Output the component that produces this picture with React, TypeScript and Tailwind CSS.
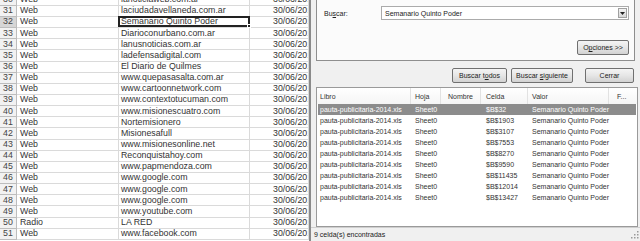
import React from "react";

const sheetRows: [number, string, string][] = [
  [30, "Web", "lanoticiaweb.com.ar"],
  [31, "Web", "laciudadavellaneda.com.ar"],
  [32, "Web", "Semanario Quinto Poder"],
  [33, "Web", "Diarioconurbano.com.ar"],
  [34, "Web", "lanusnoticias.com.ar"],
  [35, "Web", "ladefensadigital.com"],
  [36, "Web", "El Diario de Quilmes"],
  [37, "Web", "www.quepasasalta.com.ar"],
  [38, "Web", "www.cartoonnetwork.com"],
  [39, "Web", "www.contextotucuman.com"],
  [40, "Web", "www.misionescuatro.com"],
  [41, "Web", "Nortemisionero"],
  [42, "Web", "Misionesafull"],
  [43, "Web", "www.misionesonline.net"],
  [44, "Web", "Reconquistahoy.com"],
  [45, "Web", "www.papmendoza.com"],
  [46, "Web", "www.google.com"],
  [47, "Web", "www.google.com"],
  [48, "Web", "www.google.com"],
  [49, "Web", "www.youtube.com"],
  [50, "Radio", "LA RED"],
  [51, "Web", "www.facebook.com"],
];

const cells = ["$B$32", "$B$1903", "$B$3107", "$B$7553", "$B$8270", "$B$9590", "$B$11435", "$B$12014", "$B$13427"];

function Sheet() {
  return (
    <div className="w-[309px] h-[241px] overflow-hidden bg-white text-[#333] text-[8.8px]" style={{ fontFamily: '"Liberation Sans", Arial, sans-serif' }}>
      <div className="-mt-[5.3px] flex flex-col">
        {sheetRows.map(([n, b, c]) => {
          const sel = n === 32;
          return (
            <div key={n} className="flex h-[11.15px] shrink-0">
              <div className={`w-[17px] shrink-0 flex items-center justify-center border-r border-b border-[#bdbdbd] text-[#444] ${sel ? "bg-[#d6d6d6]" : "bg-[#f2f2f2]"}`}>{n}</div>
              <div className="w-[102px] shrink-0 flex items-center pl-[3px] border-r border-b border-[#dadada] whitespace-nowrap overflow-hidden">{b}</div>
              <div className="relative w-[131px] shrink-0 flex items-center pl-[2px] border-r border-b border-[#dadada] whitespace-nowrap">
                <span className="relative z-0">{c}</span>
                {sel && (
                  <div className="absolute -left-[1px] -top-[1px] -right-[1px] -bottom-[0px] border-2 border-[#222]">
                    <div className="absolute -right-[3px] -bottom-[3px] w-[4px] h-[4px] bg-[#222] border border-white" />
                  </div>
                )}
              </div>
              <div className="flex-1 flex items-center pl-[23px] border-b border-r border-[#dadada] whitespace-nowrap overflow-hidden">30/06/2014</div>
            </div>
          );
        })}
      </div>
    </div>
  );
}

function Btn({ children, className }: { children: React.ReactNode; className: string }) {
  return (
    <div className={`h-[15px] flex items-center justify-center rounded-[2px] border border-[#707070] bg-gradient-to-b from-[#f4f4f4] via-[#e6e6e6] to-[#d2d2d2] text-[#222] whitespace-nowrap ${className}`}>
      <span>{children}</span>
    </div>
  );
}

function Dialog() {
  return (
    <div className="w-[331px] h-[241px] flex flex-col bg-[#f0f0f0] border-l-2 border-[#8a8a8a] text-[7px] text-[#222] leading-none" style={{ fontFamily: '"Liberation Sans", Arial, sans-serif' }}>
      <div className="flex-1 flex flex-col pl-[5px]">
        {/* tab page */}
        <div className="w-[319px] h-[61px] shrink-0 bg-[#fbfbfb] border-l border-r border-b border-[#8e8e8e]">
          <div className="flex items-center h-[14px] mt-[6px]">
            <div className="w-[64px] pl-[7px]"><span>Bu<span className="underline">s</span>car:</span></div>
            <div className="w-[248px] h-[14px] bg-white border border-[#ababab] flex items-center justify-between pl-[3px] pr-[1px]">
              <span>Semanario Quinto Poder</span>
              <div className="w-[9px] h-[10px] border border-[#a0a0a0] bg-gradient-to-b from-[#f4f4f4] to-[#d8d8d8] flex items-center justify-center">
                <svg width="5" height="3" viewBox="0 0 5 3"><path d="M0 0h5L2.5 3z" fill="#222" /></svg>
              </div>
            </div>
          </div>
          <div className="flex justify-end pr-[5px] mt-[20px]">
            <Btn className="w-[52px]">O<span className="underline">p</span>ciones &gt;&gt;</Btn>
          </div>
        </div>
        {/* buttons row */}
        <div className="flex h-[26px] items-center pt-[2px]">
          <Btn className="ml-[136px] w-[55px]">Buscar t<span className="underline">o</span>dos</Btn>
          <Btn className="ml-[4px] w-[62px]">Buscar <span className="underline">s</span>iguiente</Btn>
          <Btn className="ml-[12px] w-[49px]">Cerrar</Btn>
        </div>
        {/* list */}
        <div className="w-[322px] h-[140px] bg-white border border-[#9a9a9a] flex flex-col">
          <div className="flex h-[16px] shrink-0 items-center text-[#333] bg-gradient-to-b from-white to-[#f5f5f5]">
            <div className="w-[94px] pl-[3px] h-full flex items-center border-r border-[#e2e2e2]">Libro</div>
            <div className="w-[30px] pl-[4px] h-full flex items-center border-r border-[#e2e2e2]">Hoja</div>
            <div className="w-[40px] pl-[7px] h-full flex items-center border-r border-[#e2e2e2]">Nombre</div>
            <div className="w-[47px] pl-[5px] h-full flex items-center border-r border-[#e2e2e2]">Celda</div>
            <div className="w-[81px] pl-[4px] h-full flex items-center border-r border-[#e2e2e2]">Valor</div>
            <div className="flex-1 pl-[8px] h-full flex items-center">F...</div>
          </div>
          {cells.map((c, i) => (
            <div key={c} className={`flex h-[11px] shrink-0 items-center mx-[1px] ${i === 0 ? "bg-[#8c8c8c] text-white" : "text-[#333]"}`}>
              <div className="w-[93px] pl-[2px]">pauta-publicitaria-2014.xls</div>
              <div className="w-[30px] pl-[4px]">Sheet0</div>
              <div className="w-[40px]" />
              <div className="w-[47px] pl-[5px]">{c}</div>
              <div className="w-[81px] pl-[4px] whitespace-nowrap">Semanario Quinto Poder</div>
              <div className="flex-1" />
            </div>
          ))}
        </div>
      </div>
      {/* status bar */}
      <div className="h-[14px] shrink-0 border-t border-[#cfcfcf] flex items-center justify-between pl-[3px] pr-[1px]">
        <span>9 celda(s) encontradas</span>
        <svg width="8" height="8" viewBox="0 0 8 8">
          {[[6, 0], [6, 3], [3, 3], [6, 6], [3, 6], [0, 6]].map(([x, y], i) => (
            <rect key={i} x={x} y={y} width="1.5" height="1.5" fill="#9a9a9a" />
          ))}
        </svg>
      </div>
    </div>
  );
}

export default function App() {
  return (
    <div className="w-[640px] h-[241px] flex overflow-hidden bg-white">
      <Sheet />
      <Dialog />
    </div>
  );
}
